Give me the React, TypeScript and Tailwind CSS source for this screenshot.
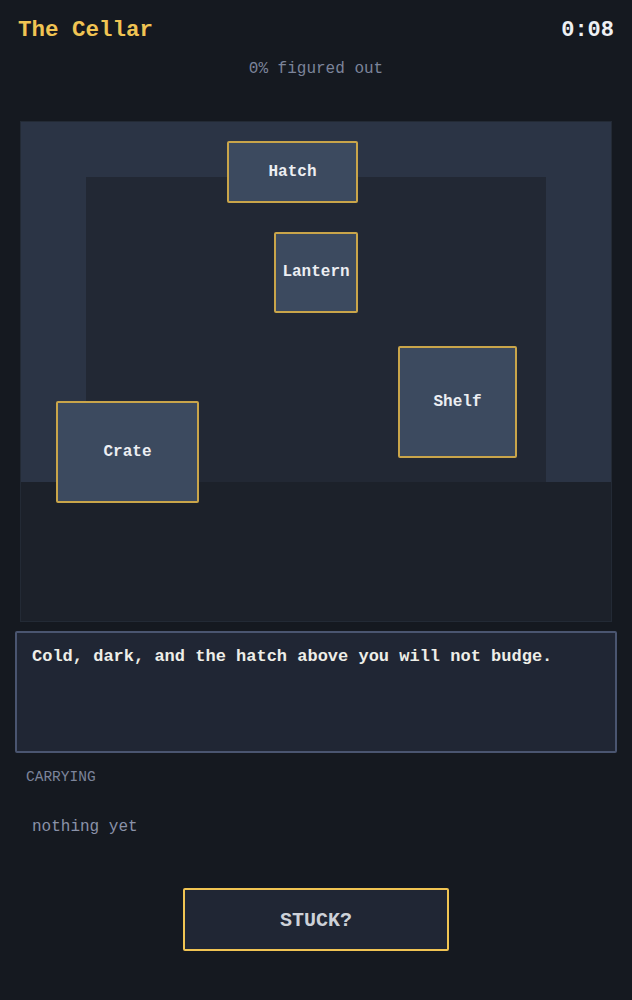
import React from "react";

type Thing = { name: string; box: string };

// spots in the room, placed on the room canvas
const things: Thing[] = [
  { name: "Hatch", box: "left-[206px] top-[19px] w-[131px] h-[62px]" },
  { name: "Lantern", box: "left-[253px] top-[110px] w-[84px] h-[81px]" },
  { name: "Shelf", box: "left-[377px] top-[224px] w-[119px] h-[112px]" },
  { name: "Crate", box: "left-[35px] top-[279px] w-[143px] h-[102px]" },
];

const App: React.FC = () => {
  return (
    <div className="min-h-[1000px] w-full bg-[#151920] font-['Courier_New','Liberation_Mono',monospace] font-bold">
      <div className="flex items-center justify-between px-[18px] pt-[14px]">
        <div className="text-[22.5px] text-[#f0c453]">The Cellar</div>
        <div className="text-[22px] text-[#eef0f4]">0:08</div>
      </div>
      <div className="mt-[9px] text-center text-[16px] font-normal text-[#7c849a]">0% figured out</div>

      <div className="relative mx-[20px] mt-[40px] h-[501px] overflow-hidden border border-[#232a35] bg-[#1c212a]">
        <div className="h-[360px] bg-[#2b3445] px-[65px] pt-[55px]">
          <div className="h-full bg-[#222834]"></div>
        </div>
        {things.map((t) => (
          <div
            key={t.name}
            className={`absolute ${t.box} flex items-center justify-center rounded-[2px] border-2 border-[#c9a54a] bg-[#3c4a5f] text-[16px] text-[#eceef2]`}
          >
            {t.name}
          </div>
        ))}
      </div>

      <div className="mx-[15px] mt-[9px] h-[122px] rounded-[2px] border-2 border-[#4a5570] bg-[#202634] px-[15px] pt-[11px] text-[17px] text-[#eeeee8]">
        Cold, dark, and the hatch above you will not budge.
      </div>

      <div className="mt-[14px] px-[26px] text-[14.5px] font-normal text-[#7c849a]">CARRYING</div>
      <div className="mt-[26px] px-[32px] text-[16px] font-normal text-[#8a92a8]">nothing yet</div>

      <div className="mt-[49px] flex justify-center">
        <button className="h-[63px] w-[266px] rounded-[2px] border-2 border-[#f0c453] bg-[#202634] pt-[3px] text-[20px] font-bold text-[#cdd1d8]">
          STUCK?
        </button>
      </div>
    </div>
  );
};

export default App;
